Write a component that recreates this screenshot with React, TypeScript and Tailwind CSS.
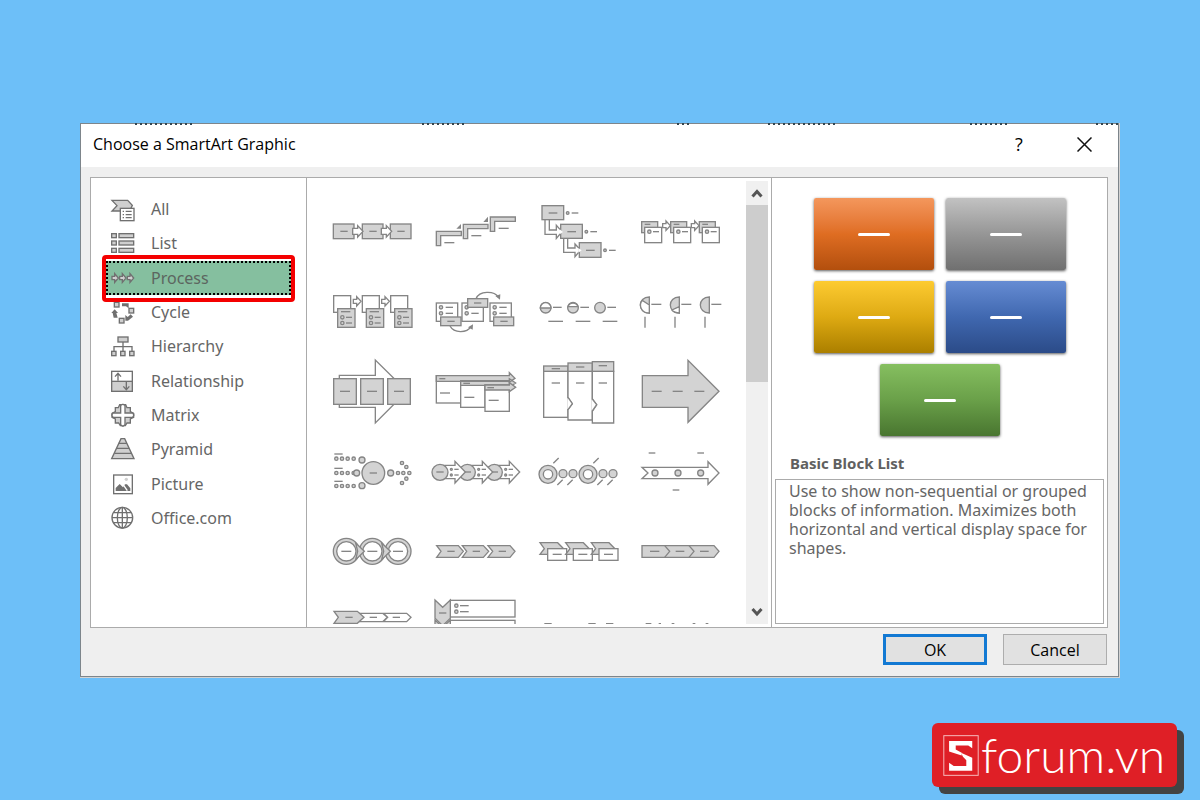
import { useState, type ReactNode } from "react";

type Drawing = { name: string; x: number; y: number; art: ReactNode };

const W = "#ffffff";

/* Short stroke that stands for a caption inside a shape. */
const Dash = ({ x, y, w = 22 }: { x: number; y: number; w?: number }) => (
  <path d={`M${x} ${y}h${w}`} />
);

const Ring = ({ x, y, r = 5 }: { x: number; y: number; r?: number }) => (
  <circle cx={x} cy={y} r={r} />
);

/* Small block arrow pointing right, centred on x, y. */
const Arrow = ({ x, y }: { x: number; y: number }) => (
  <path fill={W} d={`M${x - 10} ${y - 6}h10v-8l13 14l-13 14v-8h-10z`} />
);

/* Category icons are drawn at three units to the pixel. */
const categories: Drawing[] = [
  {
    name: "All", x: 102, y: 282,
    art: (
      <>
        <path d="M111 256H158L172 271L164 288H111L126 272Z" />
        <rect x="136" y="280" width="41" height="37" fill={W} />
        <path d="M143 289h4M152 289h18M143 299h4M152 299h18M143 308h4M152 308h18" />
      </>
    ),
  },
  {
    name: "List", x: 102, y: 385,
    art: [357, 379, 401].map((y) => (
      <g key={y}>
        <rect x="110" y={y} width="14" height="12" />
        <rect x="132" y={y} width="44" height="12" />
      </g>
    )),
  },
  {
    name: "Process", x: 102, y: 488,
    art: [111, 134, 157].map((x) => (
      <path key={x} d={`M${x} 483h8v-8l11 13l-11 13v-8h-8z`} />
    )),
  },
  {
    name: "Cycle", x: 102, y: 591,
    art: (
      <>
        <rect x="118" y="562" width="14" height="14" />
        <rect x="162" y="580" width="14" height="14" />
        <rect x="133" y="610" width="14" height="14" />
        <path fill="#707070" stroke="none" d="M141 565h20v15l-8-6h-12zM109 594l10-11l10 11h-5l4 14h-12l-3-14zM151 617v-17l7 6l9-8l7 7l-15 12z" />
      </>
    ),
  },
  {
    name: "Hierarchy", x: 102, y: 694,
    art: (
      <>
        <rect x="129" y="667" width="30" height="15" />
        <path fill="none" d="M144 682V710M117 710V696H171V710" />
        <rect x="110" y="710" width="13" height="13" />
        <rect x="137" y="710" width="13" height="13" />
        <rect x="164" y="710" width="13" height="13" />
      </>
    ),
  },
  {
    name: "Relationship", x: 102, y: 138,
    art: (
      <>
        <rect x="110" y="109" width="62" height="60" fill={W} />
        <rect x="110" y="139" width="62" height="30" />
        <path fill="none" d="M129 137V116M120 125L129 115L138 125M154 141V163M145 154L154 164L163 154" />
      </>
    ),
  },
  {
    name: "Matrix", x: 102, y: 240,
    art: (
      <>
        <path d="M134 209h18l4 9h10v12l10 5v12l-10 5v12h-10l-5 8h-15l-5-8h-10v-12l-10-5v-12l10-5v-12h9z" />
        <path fill={W} d="M137 211l5-3h3l5 3v23h23l3 5v3l-3 5h-23v22l-5 4h-3l-5-4v-22h-23l-3-5v-3l3-5h23z" />
      </>
    ),
  },
  {
    name: "Pyramid", x: 102, y: 342,
    art: (
      <>
        <path d="M138 311H149L177 371H110Z" />
        <path d="M131 325H156M125 340H162M118 355H170" />
      </>
    ),
  },
  {
    name: "Picture", x: 102, y: 445,
    art: (
      <>
        <rect x="116" y="418" width="56" height="56" fill={W} />
        <path fill="#707070" stroke="none" d="M122 466V457L134 445L144 455L150 446H156L166 458V466Z" />
        <path stroke={W} d="M144 446L157 465" />
        <circle cx="154" cy="431" r="5" stroke="none" />
      </>
    ),
  },
  {
    name: "Office.com", x: 102, y: 548,
    art: (
      <>
        <circle cx="142" cy="547" r="31" fill={W} />
        <ellipse cx="142" cy="547" rx="15" ry="31" fill="none" />
        <path d="M142 516V578M111 547H173M116 532H168M116 562H168" />
      </>
    ),
  },
];

/* Layout thumbnails, also three units to the pixel; x, y is the view origin. */
const layouts: Drawing[] = [
  {
    name: "Basic Process", x: 0, y: 3,
    art: (
      <>
        {[40, 127, 211].map((x) => (
          <g key={x}>
            <rect x={x} y="102" width="62" height="44" />
            <Dash x={x + 21} y={124} />
          </g>
        ))}
        <path fill={W} d="M98 115h15v-8l16 17l-16 17v-8h-15zM184 115h15v-8l16 17l-16 17v-8h-15z" />
      </>
    ),
  },
  {
    name: "Step Up Process", x: 309, y: 3,
    art: (
      <>
        <path d="M349 124h75v13h-62v30h-13zM430 103h74v13h-61v30h-13zM511 81h75v13h-62v30h-13z" />
        <path fill="#858585" stroke="none" d="M409 116L423 102V116ZM490 96L504 80V96Z" />
        <Dash x={373} y={158} w={30} />
        <Dash x={454} y={137} w={30} />
        <Dash x={536} y={115} w={30} />
      </>
    ),
  },
  {
    name: "Step Down Process", x: 3, y: 3,
    art: (
      <>
        <path fill={W} d="M60 89V133H94V145L111 125L94 106V120H73V89M116 145V187H150V200L167 180L150 162V174H128V145" />
        <rect x="51" y="47" width="65" height="42" />
        <rect x="107" y="103" width="65" height="42" />
        <rect x="163" y="158" width="65" height="44" />
        <path fill={W} stroke="none" d="M104 118L114 126L104 133ZM160 174L170 181L160 188Z" />
        {[0, 56, 112].map((d) => (
          <g key={d}>
            <Dash x={71 + d} y={69 + d} w={26} />
            <Ring x={128 + d} y={69 + d} r={4} />
            <Dash x={140 + d} y={69 + d} w={20} />
          </g>
        ))}
      </>
    ),
  },
  {
    name: "Accent Process", x: 312, y: 3,
    art: (
      <>
        {[350, 437, 523].map((x) => (
          <g key={x}>
            <rect x={x} y="95" width="48" height="33" />
            <Dash x={x + 9} y={103} w={17} />
            <rect x={x + 9} y="112" width="51" height="46" fill={W} />
            <Ring x={x + 23} y={125} />
            <Dash x={x + 34} y={125} w={18} />
          </g>
        ))}
        <Arrow x={423} y={107} />
        <Arrow x={509} y={107} />
      </>
    ),
  },
  {
    name: "Alternating Flow", x: 0, y: 243,
    art: (
      <>
        {[41, 127, 212].map((x) => (
          <g key={x}>
            <rect x={x} y="317" width="51" height="50" fill={W} />
            <rect x={x + 12} y="356" width="52" height="56" />
            <Dash x={x + 22} y={365} w={28} />
            <Ring x={x + 26} y={382} />
            <Ring x={x + 26} y={399} />
            <Dash x={x + 37} y={382} w={18} />
            <Dash x={x + 37} y={399} w={18} />
          </g>
        ))}
        <Arrow x={110} y={334} />
        <Arrow x={195} y={334} />
      </>
    ),
  },
  {
    name: "Continuous Block Process", x: 309, y: 243,
    art: (
      <>
        {[349, 426, 510].map((x) => (
          <g key={x}>
            <rect x={x} y="339" width="64" height="55" fill={W} />
            <Ring x={x + 14} y={352} />
            <Ring x={x + 14} y={370} />
            <Dash x={x + 28} y={352} />
            <Dash x={x + 28} y={370} />
          </g>
        ))}
        <rect x="362" y="381" width="61" height="26" />
        <rect x="443" y="326" width="60" height="26" />
        <rect x="521" y="381" width="60" height="26" />
        <Dash x={382} y={394} />
        <Dash x={462} y={339} />
        <Dash x={541} y={394} />
        <path fill="none" d="M468 326C478 302 522 302 535 321M390 408C402 430 440 430 454 409" />
        <path fill="#858585" stroke="none" d="M526 318L541 313L540 329ZM444 412L459 403L458 419Z" />
      </>
    ),
  },
  {
    name: "Pie Process", x: 3, y: 243,
    art: (
      <>
        {[62, 144, 225].map((x) => (
          <g key={x}>
            <Ring x={x} y={353} r={16} />
            <Dash x={x + 22} y={352} w={26} />
            <Dash x={x + 8} y={394} w={44} />
          </g>
        ))}
        <path fill={W} d="M46 354A16 16 0 0 1 78 354ZM129 350A16 16 0 0 1 159 350Z" />
      </>
    ),
  },
  {
    name: "Gear Process", x: 312, y: 243,
    art: (
      <>
        {[373, 463, 553].map((x) => (
          <g key={x}>
            <path d={`M${x} 321C${x - 36} 321 ${x - 36} 369 ${x} 369Z`} />
            <Dash x={x + 6} y={343} w={30} />
            <path d={`M${x - 13} 380v33`} />
          </g>
        ))}
        <path fill={W} d="M373 345L352 331C340 345 348 369 373 369ZM463 350L441 360C447 367 454 369 463 369Z" />
      </>
    ),
  },
  {
    name: "Continuous Arrow Process", x: 0, y: 3,
    art: (
      <>
        <path fill={W} d="M58 76H166V30L261 124L166 219V172H58Z" />
        {[41, 122, 203].map((x) => (
          <g key={x}>
            <rect x={x} y="86" width="68" height="77" />
            <Dash x={x + 19} y={124} w={30} />
          </g>
        ))}
      </>
    ),
  },
  {
    name: "Interconnected Block Process", x: 309, y: 3,
    art: (
      <>
        <rect x="349" y="77" width="73" height="82" fill={W} />
        <rect x="422" y="91" width="73" height="81" fill={W} />
        <path d="M349 77H568V68L585 85L568 97V94H349ZM422 92H568V86L587 99L568 112V106H422Z" />
        <rect x="495" y="105" width="73" height="79" fill={W} />
        <path d="M495 105H568V98L587 112L568 125V120H495Z" />
        <Dash x={358} y={86} w={18} />
        <Dash x={430} y={100} w={20} />
        <Dash x={502} y={113} w={20} />
        <Dash x={360} y={129} w={30} />
        <Dash x={433} y={142} w={30} />
        <Dash x={506} y={151} w={30} />
      </>
    ),
  },
  {
    name: "Increasing Arrows Process", x: 3, y: 3,
    art: (
      <>
        <rect x="56" y="64" width="73" height="138" fill={W} />
        <path fill={W} d="M129 64H202V210H129V179L142 161L129 142Z" />
        <path fill={W} d="M202 64H266V219H202V183L215 164L202 147Z" />
        <path stroke={W} d="M129 145V177M202 150V181" />
        <path fill={W} d="M129 142L142 161L129 179M202 147L215 164L202 183" />
        <rect x="56" y="48" width="73" height="16" />
        <rect x="129" y="39" width="73" height="25" />
        <rect x="202" y="35" width="64" height="29" />
        <Dash x={80} y={56} w={25} />
        <Dash x={153} y={51} w={25} />
        <Dash x={221} y={47} w={25} />
        <Dash x={80} y={99} w={25} />
        <Dash x={153} y={99} w={25} />
        <Dash x={221} y={99} w={25} />
      </>
    ),
  },
  {
    name: "Process Arrows", x: 312, y: 3,
    art: (
      <>
        <path d="M352 77H489V31L582 124L489 217V172H352Z" />
        <Dash x={380} y={124} w={30} />
        <Dash x={443} y={124} w={30} />
        <Dash x={508} y={124} w={30} />
      </>
    ),
  },
  {
    name: "Random to Result Process", x: 0, y: 243,
    art: (
      <>
        {[326, 369, 408].map((y) => (
          <g key={y}>
            {[49, 66, 83, 101].map((x) => (
              <Ring key={x} x={x} y={y} />
            ))}
            <Dash x={43} y={y - 14} w={25} />
          </g>
        ))}
        <Ring x={126} y={330} r={9} />
        <Ring x={110} y={369} r={9} />
        <Ring x={126} y={407} r={9} />
        <Ring x={160} y={369} r={34} />
        <Dash x={149} y={369} />
        <Ring x={212} y={369} r={9} />
        <Ring x={234} y={369} />
        <Ring x={250} y={369} />
        <Ring x={268} y={369} />
        <Ring x={246} y={339} />
        <Ring x={259} y={351} />
        <Ring x={259} y={386} />
        <Ring x={246} y={399} />
      </>
    ),
  },
  {
    name: "Circle Arrow Process", x: 309, y: 243,
    art: [523, 442, 360].map((x) => (
      <g key={x}>
        <path fill={W} d={`M${x} 346H${x + 45}V334L${x + 76} 366L${x + 45} 399V386H${x}Z`} />
        <circle cx={x} cy="367" r="24" />
        <Dash x={x - 11} y={366} />
        <Ring x={x + 34} y={358} r={3} />
        <Ring x={x + 34} y={375} r={3} />
        <Dash x={x + 43} y={358} w={13} />
        <Dash x={x + 43} y={375} w={13} />
      </g>
    )),
  },
  {
    name: "Circle Accent Timeline", x: 3, y: 243,
    art: (
      <>
        {[69, 189].map((x) => (
          <g key={x}>
            <Ring x={x} y={373} r={27} />
            <circle cx={x} cy="373" r="14" fill={W} />
            <Ring x={x + 45} y={371} r={12} />
            <Ring x={x + 75} y={371} r={12} />
            <path d={`M${x + 16} 340l16-16M${x + 28} 405l16-16M${x + 58} 405l16-16`} />
          </g>
        ))}
      </>
    ),
  },
  {
    name: "Basic Timeline", x: 312, y: 243,
    art: (
      <>
        <path fill={W} d="M351 352H549V335L582 369L549 403V386H351L369 369Z" />
        <Ring x={390} y={369} r={9} />
        <Ring x={459} y={369} r={9} />
        <Ring x={527} y={369} r={9} />
        <Dash x={371} y={309} w={20} />
        <Dash x={517} y={309} w={20} />
        <Dash x={443} y={420} w={20} />
      </>
    ),
  },
  {
    name: "Chevron Accent Process", x: 0, y: 33,
    art: (
      <>
        {[79, 157, 234].map((x) => (
          <g key={x}>
            <circle cx={x} cy="154" r="39" />
            <circle cx={x} cy="154" r="29" fill={W} />
            <Dash x={x - 15} y={154} w={30} />
          </g>
        ))}
        <path d="M107 129L133 154L107 179L113 154ZM185 129L211 154L185 179L191 154Z" />
      </>
    ),
  },
  {
    name: "Basic Chevron Process", x: 309, y: 33,
    art: (
      <>
        <path d="M350 137H415L430 154L415 172H350L363 154ZM427 137H490L506 154L490 172H427L440 154ZM504 137H570L585 154L570 172H504L518 154Z" />
        <Dash x={382} y={154} />
        <Dash x={458} y={154} />
        <Dash x={536} y={154} />
      </>
    ),
  },
  {
    name: "Closed Chevron Accent", x: 3, y: 33,
    art: [45, 122, 199].map((x) => (
      <g key={x}>
        <path d={`M${x} 128h53l18 18l-18 17h-53l13-17z`} />
        <rect x={x + 23} y="146" width="57" height="35" fill={W} />
        <Dash x={x + 38} y={163} w={27} />
      </g>
    )),
  },
  {
    name: "Closed Chevron Process", x: 312, y: 33,
    art: (
      <>
        <path d="M351 137H567L582 154L567 172H351Z" />
        <path fill="none" d="M419 137L434 154L419 172M492 137L507 154L492 172" />
        <Dash x={375} y={154} w={28} />
        <Dash x={452} y={154} w={26} />
        <Dash x={525} y={154} w={26} />
      </>
    ),
  },
  {
    name: "Sub-Step Process", x: 0, y: 273,
    art: (
      <>
        <path fill={W} d="M118 340H188L202 352L188 365H118ZM190 340H260L273 352L260 365H190L203 352Z" />
        <path d="M42 334H112L132 352L112 370H42L55 352Z" />
        <Dash x={76} y={352} />
        <Dash x={149} y={352} />
        <Dash x={218} y={352} />
      </>
    ),
  },
  {
    name: "Vertical Chevron List", x: 309, y: 273,
    art: (
      <>
        <rect x="391" y="301" width="194" height="50" fill={W} />
        <rect x="391" y="361" width="194" height="50" fill={W} />
        <path d="M345 300L368 322L391 300V355L368 377L345 355Z" />
        <path d="M345 360L368 382L391 360V420H345Z" />
        <Dash x={357} y={339} />
        <Ring x={409} y={317} />
        <Ring x={409} y={335} />
        <Dash x={420} y={317} w={26} />
        <Dash x={420} y={335} w={26} />
      </>
    ),
  },
  {
    name: "Staggered Process", x: 3, y: 273,
    art: <path fill="none" d="M58 371H80M190 371H212M243 371H265" />,
  },
  {
    name: "Circle Process", x: 312, y: 273,
    art: <path fill="none" d="M362 371H379M401 371H408M440 371H448M503 371H511M542 371H550" />,
  },
];

const blocks = [
  "from-[#f4975c] via-[#df6d22] to-[#b34f0d]",
  "from-[#c2c2c2] via-[#969696] to-[#707070]",
  "from-[#fdcb30] via-[#deaa12] to-[#ab7f00]",
  "from-[#668cd3] via-[#4068b0] to-[#2b4b88]",
  "from-[#86bf60] via-[#6aa049] to-[#497630]",
];

const Chevron = ({ d }: { d: string }) => (
  <svg viewBox="0 0 12 10" className="h-2.5 w-3" fill="none" stroke="#555555" strokeWidth="3" aria-hidden="true">
    <path d={d} />
  </svg>
);

export default function App() {
  const [category, setCategory] = useState("Process");

  return (
    <main className="flex min-h-screen flex-col items-center justify-between gap-11 bg-[#6dbff8] pt-[123px] pb-[13px] font-['Noto_Sans','Open_Sans',sans-serif]">
      <section
        role="dialog"
        aria-labelledby="dialog-title"
        className="relative w-full max-w-[1040px] bg-[#d2d2d2] pr-px pb-px"
      >
        {/* Tips of the sheet's column headings, showing above the window edge */}
        <svg
          viewBox="0 0 1040 2"
          preserveAspectRatio="none"
          className="absolute inset-x-0 top-0 h-0.5 w-full"
          stroke="#33454f"
          strokeWidth="2"
          strokeDasharray="2 3"
          aria-hidden="true"
        >
          <path d="M55 1H113M342 1H386M597 1H612M688 1H758M890 1H928M1016 1H1040" />
        </svg>
        <div className="border border-[#7d858b] bg-[#efefef]">
          <header className="flex h-[43px] items-center bg-white pr-[26px] pb-[3px] pl-3 text-black">
            <h1 id="dialog-title" className="flex-1 font-['Open_Sans',sans-serif] text-base">
              Choose a SmartArt Graphic
            </h1>
            <button type="button" aria-label="Help" className="w-5 font-['Open_Sans',sans-serif] text-lg font-medium">
              ?
            </button>
            <button type="button" aria-label="Close" className="ml-12 py-2">
              <svg viewBox="0 0 15 15" className="size-[15px]" stroke="#111111" strokeWidth="1.5" aria-hidden="true">
                <path d="M0.5 0.5L14.5 14.5M14.5 0.5L0.5 14.5" />
              </svg>
            </button>
          </header>

          <div className="mt-[10px] mr-[10px] ml-[9px] flex border border-[#ababab] bg-white">
            <nav aria-label="Categories" className="w-[216px] shrink-0 border-r border-[#ababab] px-[15px] pt-[14px]">
              <ul className="grid h-[343px] grid-rows-10">
                {categories.map((c) => {
                  const active = c.name === category;
                  return (
                    <li key={c.name} className={active ? "relative z-10" : "relative"}>
                      {active && (
                        <span className="absolute -top-[6px] -right-1 -bottom-[7px] -left-1 rounded-sm border-4 border-[#f40000] bg-white" />
                      )}
                      <button
                        type="button"
                        onClick={() => setCategory(c.name)}
                        className={
                          active
                            ? "relative flex h-full w-full items-center gap-[14px] bg-[#85bf9f] pl-[3px] text-base text-[#5c6660] outline-2 -outline-offset-2 outline-dotted outline-black"
                            : "relative flex h-full w-full items-center gap-[14px] pl-[3px] text-base text-[#666666]"
                        }
                      >
                        <svg
                          viewBox={`${c.x} ${c.y - 48} 84 96`}
                          className="h-8 w-7"
                          stroke="#707070"
                          strokeWidth="4"
                          fill="#cfcfcf"
                          aria-hidden="true"
                        >
                          {c.art}
                        </svg>
                        {c.name}
                      </button>
                    </li>
                  );
                })}
              </ul>
            </nav>

            <div className="my-[3px] flex h-[443px] flex-1 overflow-hidden pr-[3px]">
              <div className="flex-1 pt-[10px] pr-[14px] pl-[13px]">
                <div className="grid grid-cols-4">
                  {layouts.map((l) => (
                    <button key={l.name} type="button" aria-label={l.name} className="h-20">
                      <svg
                        viewBox={`${l.x} ${l.y} 309 240`}
                        className="h-20 w-[103px]"
                        stroke="#858585"
                        strokeWidth="4"
                        fill="#d3d3d3"
                        aria-hidden="true"
                      >
                        {l.art}
                      </svg>
                    </button>
                  ))}
                </div>
              </div>
              <div className="flex w-[22px] flex-col items-center bg-[#f0f0f0]">
                <button type="button" aria-label="Scroll up" className="flex h-6 w-full items-center justify-center">
                  <Chevron d="M1.5 8.5L6 3.5L10.5 8.5" />
                </button>
                <div className="h-[177px] w-full bg-[#cdcdcd]" />
                <button type="button" aria-label="Scroll down" className="mt-auto flex h-6 w-full items-center justify-center">
                  <Chevron d="M1.5 2L6 7L10.5 2" />
                </button>
              </div>
            </div>

            <aside className="flex w-[336px] shrink-0 flex-col border-l border-[#ababab] px-[3px] pt-5 pb-[3px]">
              <div className="mx-auto flex w-[252px] flex-wrap justify-center gap-x-3 gap-y-[11px]">
                {blocks.map((b) => (
                  <div
                    key={b}
                    className={`flex h-[72px] w-[120px] items-center justify-center rounded-xs bg-linear-to-b shadow-[0_1px_3px_rgba(0,0,0,0.65)] ${b}`}
                  >
                    <span className="h-[3px] w-8 rounded-xs bg-white" />
                  </div>
                ))}
              </div>
              <h2 className="mt-[15px] pl-[15px] text-[15px] leading-6 font-bold text-[#606060]">Basic Block List</h2>
              <p className="mt-1 flex-1 border border-[#ababab] pt-[2px] pr-3 pl-[13px] text-base leading-[19px] text-[#666666]">
                Use to show non-sequential or grouped blocks of information. Maximizes both horizontal and vertical
                display space for shapes.
              </p>
            </aside>
          </div>

          <footer className="flex justify-end gap-4 pt-[6px] pr-[11px] pb-[11px] font-['Open_Sans',sans-serif] text-base text-black">
            <button type="button" className="h-[31px] w-[104px] border-[3px] border-[#1279d3] bg-[#e1e1e1] leading-6">
              OK
            </button>
            <button type="button" className="h-[31px] w-[104px] border border-[#adadad] bg-[#e1e1e1] leading-6">
              Cancel
            </button>
          </footer>
        </div>
      </section>

      <a
        href="#sforum"
        aria-label="Sforum.vn"
        className="mr-[23px] flex h-16 w-[245px] items-center gap-0.5 self-end rounded-md bg-[#df1f26] pl-[11px] text-white shadow-[7px_7px_0_#434343]"
      >
        <svg viewBox="72 74 108 124" className="h-[41px] w-9 shrink-0" fill="#ffffff" aria-hidden="true">
          <rect x="74" y="76" width="104" height="120" fill="none" stroke="#f7b9bb" strokeWidth="3" />
          <path d="M90 92H160V114L148 106H110V118L128 128V136L90 124Z" />
          <path d="M126 128L160 143V182H90V158L104 168H142V150L132 140Z" />
        </svg>
        <span className="font-['Lato',sans-serif] text-5xl leading-[60px] font-light">forum.vn</span>
      </a>
    </main>
  );
}
